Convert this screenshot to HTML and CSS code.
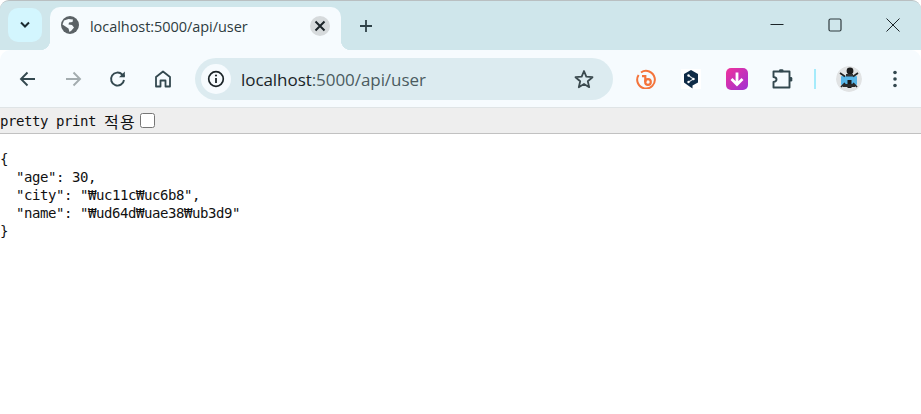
FILE: index.html
```html
<!DOCTYPE html>
<html lang="ko">
<head>
<meta charset="utf-8">
<title>localhost:5000/api/user</title>
<link rel="stylesheet" href="styles.css">
</head>
<body>
<div class="window">
  <header class="tabstrip">
    <div class="tabsearch">
      <svg width="12" height="8" viewBox="0 0 12 8"><path d="M2 1.500 6 5.500 10 1.500" fill="none" stroke="#1b2a30" stroke-width="2"/></svg>
    </div>
    <div class="tab">
      <svg class="globe" width="18" height="18" viewBox="0 0 18 18"><circle cx="9" cy="9" r="9" fill="#5b6266"/><path d="M3 4.500 7.500 3 12 3.500 11.500 6 8 6.500 7.500 8.500 11 9 13 11.500 10.500 14.500 8.500 16 7.500 12.500 4.500 10.500 1.500 8.500Z" fill="#f6fbfe"/></svg>
      <span class="tabtitle">localhost:5000/api/user</span>
      <span class="tabclose"><svg width="12" height="12" viewBox="0 0 12 12"><path d="M1.500 1.500 10.500 10.500M10.500 1.500 1.500 10.500" stroke="#1b2428" stroke-width="2"/></svg></span>
    </div>
    <div class="newtab"><svg width="14" height="14" viewBox="0 0 14 14"><path d="M7 1V13M1 7H13" stroke="#2f4248" stroke-width="1.800"/></svg></div>
    <div class="wincontrols">
      <svg width="14" height="14" viewBox="0 0 14 14"><path d="M0.500 6.500H13.500" stroke="#1b2428" stroke-width="1"/></svg>
      <svg width="14" height="14" viewBox="0 0 14 14"><rect x="1" y="1" width="12" height="12" rx="1.500" fill="none" stroke="#2f3a3e" stroke-width="1.200"/></svg>
      <svg width="14" height="14" viewBox="0 0 14 14"><path d="M0.500 0.500 13.500 13.500M13.500 0.500 0.500 13.500" stroke="#1b2428" stroke-width="1"/></svg>
    </div>
  </header>
  <nav class="toolbar">
    <div class="navicons">
      <svg width="18" height="16" viewBox="0 0 18 16"><path d="M16 8H2.500M8.500 1.500 2 8 8.500 14.500" fill="none" stroke="#33484f" stroke-width="1.900"/></svg>
      <svg width="18" height="16" viewBox="0 0 18 16"><path d="M2 8H15.500M9.500 1.500 16 8 9.500 14.500" fill="none" stroke="#a3acaf" stroke-width="1.900"/></svg>
      <svg width="18" height="18" viewBox="0 0 18 18"><path d="M15 10a6.500 6.500 0 1 1-1.800-5.500L15.500 6.500" fill="none" stroke="#33484f" stroke-width="1.900"/><path d="M15.800 1.500V7.300H10Z" fill="#33484f"/></svg>
      <svg width="18" height="18" viewBox="0 0 18 18"><path d="M2 16.500V7L9 1.500 16 7V16.500H11.500V10.500H6.500V16.500Z" fill="none" stroke="#33484f" stroke-width="1.800" stroke-linejoin="round"/></svg>
    </div>
    <div class="omnibox">
      <span class="siteinfo"><svg width="18" height="18" viewBox="0 0 18 18"><circle cx="9" cy="9" r="7.300" fill="none" stroke="#1b2428" stroke-width="1.700"/><path d="M9 8V13" stroke="#1b2428" stroke-width="1.800"/><circle cx="9" cy="5.500" r="1.100" fill="#1b2428"/></svg></span>
      <span class="url"><span class="host">localhost</span>:5000/api/user</span>
      <svg class="star" width="20" height="20" viewBox="0 0 20 20"><path d="M10 2 12.300 7.700 18.500 8.200 13.800 12.200 15.200 18.200 10 15 4.800 18.200 6.200 12.200 1.500 8.200 7.700 7.700Z" fill="none" stroke="#3b4a4f" stroke-width="1.800" stroke-linejoin="round"/></svg>
    </div>
    <div class="extensions">
      <svg class="ext" width="20" height="20" viewBox="0 0 20 20"><path d="M5 3.500A8.800 8.800 0 1 1 2.600 6" fill="none" stroke="#f4743b" stroke-width="2"/><path d="M6 7.200 9.300 7.200 9.300 13" stroke="#f4743b" stroke-width="2.200" fill="none"/><circle cx="12" cy="13" r="2.800" fill="none" stroke="#f4743b" stroke-width="2.200"/></svg>
      <span class="deepl"><svg width="20" height="20" viewBox="0 0 20 20"><rect width="20" height="20" fill="#fff"/><path d="M10 1 17 5V13.500L11.500 16.500V19.500L8.500 17.500 3 13.500V5Z" fill="#0f2b46"/><path d="M7.500 6.500 12.500 10 7.500 13" fill="none" stroke="#d7dde2" stroke-width="1.100"/><circle cx="7.500" cy="6.500" r="1.200" fill="#fff"/><circle cx="12.500" cy="10" r="1.200" fill="#fff"/><circle cx="7.500" cy="13" r="1.200" fill="#fff"/></svg></span>
      <span class="downloader"><svg width="16" height="16" viewBox="0 0 16 16"><path d="M8 1.500V13.500M2.500 8 8 13.500 13.500 8" fill="none" stroke="#fff" stroke-width="2.800"/></svg></span>
      <svg class="puzzle" width="22" height="22" viewBox="0 0 22 22"><path d="M1.500 3.500H17.500V19.500H1.500V14C5.500 13.500 5.500 9.500 1.500 9Z" fill="none" stroke="#33484f" stroke-width="1.900" stroke-linejoin="round"/><rect x="7" y="1.200" width="4.500" height="3" rx="1.300" fill="#33484f"/><rect x="17" y="9" width="3.300" height="4.500" rx="1.300" fill="#33484f"/></svg>
      <span class="divider"></span>
      <span class="avatar"><svg width="26" height="26" viewBox="0 0 26 26"><circle cx="13" cy="13" r="13" fill="#e1e3e4"/><rect x="5" y="10" width="16" height="9" rx="1" fill="#58b5e6"/><circle cx="14" cy="5" r="3.400" fill="#1c1c1c"/><path d="M4 7 9 10.500M22 7 17 10.500M5 21 9 17M21 21 17 17" stroke="#222" stroke-width="1.700"/><rect x="10" y="8" width="7" height="2.500" fill="#333"/><rect x="11.500" y="14" width="4" height="8" fill="#1a1a1a"/><rect x="7" y="18" width="12" height="3" fill="#2a2a2a"/></svg></span>
      <svg class="menu" width="6" height="18" viewBox="0 0 6 18"><circle cx="3" cy="2.500" r="1.800" fill="#33484f"/><circle cx="3" cy="9" r="1.800" fill="#33484f"/><circle cx="3" cy="15.500" r="1.800" fill="#33484f"/></svg>
    </div>
  </nav>
  <form class="printbar">
    <label class="printlabel">pretty print <span class="ko">적용</span><input class="check" type="checkbox"></label>
  </form>
  <pre class="json">{
  "age": 30,
  "city": "₩uc11c₩uc6b8",
  "name": "₩ud64d₩uae38₩ub3d9"
}</pre>
</div>
</body>
</html>
```
FILE: styles.css
```css
* { box-sizing: border-box; }
html, body { margin: 0; padding: 0; background: #fff; }
body { width: 921px; height: 414px; overflow: hidden; }
.window { display: flex; flex-direction: column; height: 414px; }

.tabstrip {
  height: 50px;
  flex: none;
  display: flex;
  align-items: flex-end;
  background: #cfe6eb;
  border-top: 1px solid #b9bfc1;
  border-radius: 9px 9px 0 0;
  padding-left: 8px;
}
.tabsearch {
  width: 34px;
  height: 34px;
  margin-bottom: 8px;
  border-radius: 10px;
  background: #d3f6fe;
  display: flex;
  align-items: center;
  justify-content: center;
}
.tab {
  position: relative;
  width: 291px;
  height: 43px;
  margin-left: 8px;
  background: #f6fbfe;
  border-radius: 10px 10px 0 0;
  display: flex;
  align-items: flex-start;
  padding: 9px 11px 0 11px;
}
.tab::before, .tab::after {
  content: "";
  position: absolute;
  bottom: 0;
  width: 10px;
  height: 10px;
}
.tab::before { left: -10px; background: radial-gradient(circle at 0 0, transparent 10px, #f6fbfe 10.500px); }
.tab::after { right: -10px; background: radial-gradient(circle at 100% 0, transparent 10px, #f6fbfe 10.500px); }
.globe { flex: none; }
.tabtitle {
  margin-left: 11px;
  flex: 1;
  font: 14.500px/20px "Open Sans", sans-serif;
  letter-spacing: -0.05px;
  color: #2e3b40;
  margin-top: 1px;
}
.tabclose {
  width: 20px;
  height: 20px;
  border-radius: 50%;
  background: #d6dadc;
  display: flex;
  align-items: center;
  justify-content: center;
}
.newtab { margin: 0 0 17px 18px; width: 14px; height: 14px; display: flex; }
.wincontrols {
  margin-left: auto;
  margin-bottom: 18px;
  margin-right: 21px;
  display: flex;
  gap: 44px;
}
.wincontrols svg { display: block; }

.toolbar {
  height: 58px;
  flex: none;
  display: flex;
  align-items: center;
  background: #f6fbfe;
  border-radius: 10px 10px 0 0;
  border-bottom: 1px solid #dfe4e6;
  padding: 0 0 0 19px;
}
.navicons { display: flex; align-items: center; gap: 27px; width: 176px; flex: none; }
.omnibox {
  width: 418px;
  height: 42px;
  flex: none;
  border-radius: 21px;
  background: #dcebf0;
  display: flex;
  align-items: center;
  padding: 0 19px 0 6px;
}
.siteinfo {
  width: 30px;
  height: 30px;
  border-radius: 50%;
  background: #f6fbfe;
  display: flex;
  align-items: center;
  justify-content: center;
  flex: none;
}
.url {
  margin-left: 10px;
  margin-top: 2px;
  flex: 1;
  font: 17px/22px "Open Sans", sans-serif;
  letter-spacing: -0.06px;
  color: #4b5b60;
}
.host { color: #182327; }
.star { flex: none; }

.extensions { display: flex; align-items: center; margin-left: 23px; }
.ext { flex: none; }
.deepl { margin-left: 25px; width: 20px; height: 20px; display: block; line-height: 0; }
.downloader {
  margin-left: 25px;
  width: 22px;
  height: 22px;
  border-radius: 5px;
  background: linear-gradient(135deg, #f0329b, #9f2fd4);
  display: flex;
  align-items: center;
  justify-content: center;
}
.puzzle { margin-left: 24px; }
.divider { margin-left: 20px; width: 2px; height: 20px; background: #a5ebfb; }
.avatar { margin-left: 20px; width: 26px; height: 26px; line-height: 0; border-radius: 50%; overflow: hidden; }
.menu { margin-left: 30px; }

.printbar {
  height: 26px;
  flex: none;
  margin: 0;
  background: #eeeeee;
  border-bottom: 1px solid #c1c1c1;
  display: flex;
  align-items: center;
}
.printlabel {
  display: flex;
  align-items: center;
  font: 14px/16px "DejaVu Sans Mono", monospace;
  letter-spacing: -0.43px;
  color: #111;
  white-space: pre;
}
.ko { font-family: "Noto Sans CJK KR", sans-serif; font-size: 16px; line-height: 16px; letter-spacing: 1.300px; }
.check { width: 15px; height: 15px; margin: 0 0 0 4px; }

.json {
  margin: 0;
  padding-top: 16px;
  font: 14px/18px "DejaVu Sans Mono", monospace;
  letter-spacing: -0.43px;
  color: #111;
}
```
